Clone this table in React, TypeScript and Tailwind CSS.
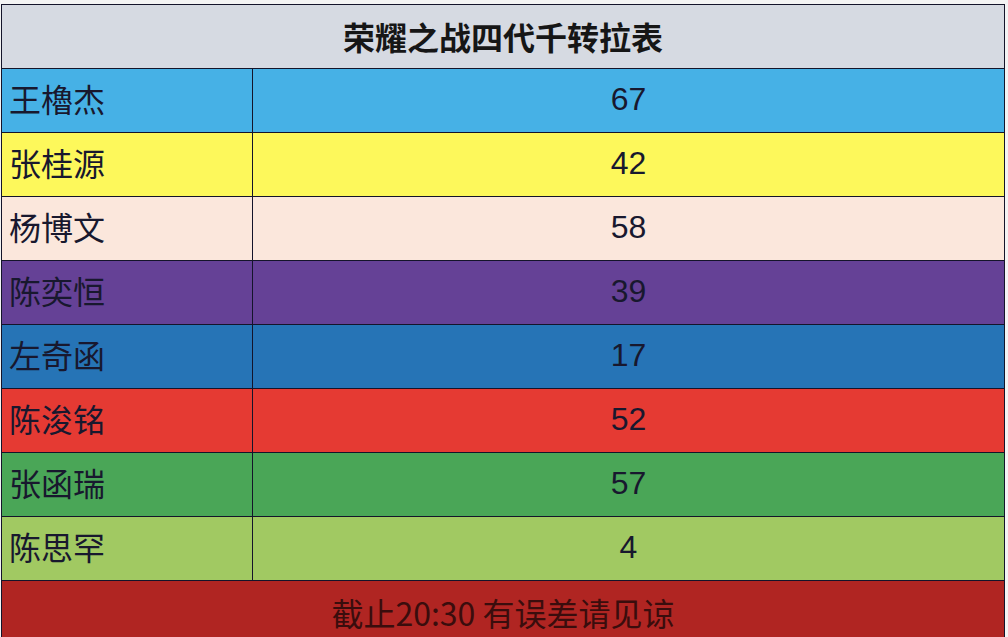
import React from "react";

const rows: { name: string; value: string; bg: string }[] = [
  { name: "王櫓杰", value: "67", bg: "bg-[#46b1e6]" },
  { name: "张桂源", value: "42", bg: "bg-[#fdf85b]" },
  { name: "杨博文", value: "58", bg: "bg-[#fbe7dc]" },
  { name: "陈奕恒", value: "39", bg: "bg-[#654196]" },
  { name: "左奇函", value: "17", bg: "bg-[#2674b6]" },
  { name: "陈浚铭", value: "52", bg: "bg-[#e53a33]" },
  { name: "张函瑞", value: "57", bg: "bg-[#4aa657]" },
  { name: "陈思罕", value: "4", bg: "bg-[#a1c962]" },
];

const cjk = "font-['Noto_Sans_CJK_SC',sans-serif]";
const num = "font-['Liberation_Sans','Noto_Sans_CJK_SC',sans-serif]";

export default function App() {
  return (
    <div className="w-[1008px] h-[637px] overflow-hidden bg-[#f4f4f4] pt-[4px] pl-[1px]">
      <div className="w-[1004px] border border-[#14142a] text-[#18182e]">
        <div
          className={`h-[64px] bg-[#d6dae2] border-b border-[#14142a] flex items-center justify-center pb-[2px] text-[32px] leading-none font-bold text-[#161616] ${cjk}`}
        >
          荣耀之战四代千转拉表
        </div>
        {rows.map((r) => (
          <div
            key={r.name}
            className={`grid grid-cols-[251px_1fr] h-[64px] border-b border-[#14142a] ${r.bg}`}
          >
            <div
              className={`border-r border-[#14142a] flex items-center pl-[7px] pb-[5px] text-[32px] leading-none ${cjk}`}
            >
              {r.name}
            </div>
            <div
              className={`flex items-center justify-center pb-[3px] text-[32px] leading-none ${num}`}
            >
              {r.value}
            </div>
          </div>
        ))}
        <div
          className={`h-[64px] bg-[#b02522] flex items-center justify-center pb-[2px] text-[32px] leading-none text-[#3a0d0d] ${cjk}`}
        >
          截止20:30 有误差请见谅
        </div>
      </div>
    </div>
  );
}
